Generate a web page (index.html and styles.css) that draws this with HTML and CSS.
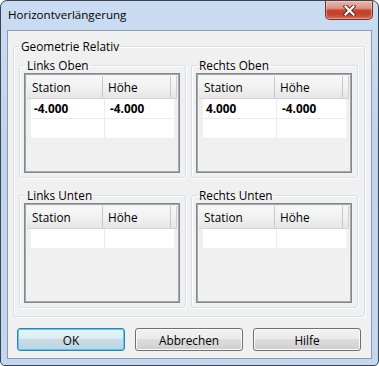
FILE: index.html
```html
<!DOCTYPE html>
<html lang="de">
<head>
<meta charset="utf-8">
<title>Horizontverlängerung</title>
<link rel="stylesheet" href="styles.css">
</head>
<body>
<div class="window">
  <div class="titlebar">
    <span class="title">Horizontverlängerung</span>
    <button class="close" aria-label="Schließen">
      <svg width="13" height="11" viewBox="0 0 13 11">
        <path d="M2.5 1.5 L10.5 9.5 M10.5 1.5 L2.5 9.5" stroke="#5a2620" stroke-width="4" stroke-linecap="square" fill="none"/>
        <path d="M2.5 1.5 L10.5 9.5 M10.5 1.5 L2.5 9.5" stroke="#ffffff" stroke-width="2.2" stroke-linecap="square" fill="none"/>
      </svg>
    </button>
  </div>
  <div class="client">
    <fieldset class="group outer">
      <legend>Geometrie Relativ</legend>
      <div class="grid">
        <fieldset class="group inner">
          <legend>Links Oben</legend>
          <div class="list">
            <div class="header"><span class="hcol c1">Station</span><span class="hcol c2">Höhe</span><span class="hcol filler"></span></div>
            <div class="row"><span class="cell c1">-4.000</span><span class="cell c2">-4.000</span></div>
            <div class="row"><span class="cell c1"></span><span class="cell c2"></span></div>
          </div>
        </fieldset>
        <fieldset class="group inner">
          <legend>Rechts Oben</legend>
          <div class="list">
            <div class="header"><span class="hcol c1">Station</span><span class="hcol c2">Höhe</span><span class="hcol filler"></span></div>
            <div class="row"><span class="cell c1">4.000</span><span class="cell c2">-4.000</span></div>
            <div class="row"><span class="cell c1"></span><span class="cell c2"></span></div>
          </div>
        </fieldset>
        <fieldset class="group inner">
          <legend>Links Unten</legend>
          <div class="list">
            <div class="header"><span class="hcol c1">Station</span><span class="hcol c2">Höhe</span><span class="hcol filler"></span></div>
            <div class="row"><span class="cell c1"></span><span class="cell c2"></span></div>
          </div>
        </fieldset>
        <fieldset class="group inner">
          <legend>Rechts Unten</legend>
          <div class="list">
            <div class="header"><span class="hcol c1">Station</span><span class="hcol c2">Höhe</span><span class="hcol filler"></span></div>
            <div class="row"><span class="cell c1"></span><span class="cell c2"></span></div>
          </div>
        </fieldset>
      </div>
    </fieldset>
    <div class="buttons">
      <button class="btn default">OK</button>
      <button class="btn">Abbrechen</button>
      <button class="btn">Hilfe</button>
    </div>
  </div>
</div>
</body>
</html>
```
FILE: styles.css
```css
* { box-sizing: border-box; }

html, body {
  margin: 0;
  padding: 0;
  background: #ffffff;
}

body {
  font-family: "Open Sans", "Noto Sans", sans-serif;
  font-size: 11.8px;
  color: #000;
}

.window {
  width: 379px;
  height: 366px;
  border: 1px solid #3b4450;
  border-radius: 7px 7px 5px 5px;
  background: linear-gradient(180deg, #cadcf1 0%, #bfd5ed 40%, #c3d8ef 100%);
  display: flex;
  flex-direction: column;
  overflow: hidden;
}

.titlebar {
  height: 29px;
  display: flex;
  justify-content: space-between;
  align-items: flex-start;
  flex: none;
}

.title {
  padding-left: 7px;
  line-height: 28px;
  font-size: 11.6px;
  color: #000;
}

.close {
  width: 48px;
  height: 19px;
  margin: 0 5px 0 0;
  padding: 0;
  border: 1px solid #6e302a;
  border-top: none;
  border-radius: 0 0 5px 5px;
  background: linear-gradient(180deg, #e9b6ab 0%, #dc9384 40%, #c54533 52%, #c23f2d 70%, #d66a51 100%);
  box-shadow: inset 0 0 0 1px rgba(255, 220, 210, 0.45);
  display: flex;
  align-items: center;
  justify-content: center;
}

.close svg { display: block; margin-top: 1px; }

.client {
  flex: 1;
  margin: 0 6px 6px 6px;
  border: 1px solid #8b9bb0;
  background: #f0f0f0;
  display: flex;
  flex-direction: column;
}

.group {
  margin: 0;
  border: 1px solid #d5dfe5;
  border-radius: 3px;
  box-shadow: inset 1px 1px 0 #ffffff, 1px 1px 0 #ffffff;
  min-width: 0;
}

.group legend {
  padding: 0 2px;
  line-height: 15px;
  font-size: 11.8px;
}

.outer {
  margin: 8px 6px 0 5px;
  padding: 4px 6px 8px 5px;
}

.outer > legend { margin-left: 0; }

.inner {
  padding: 0 5px 4px 4px;
}

.inner > legend { margin-left: 1px; }

.grid {
  display: grid;
  grid-template-columns: 1fr 1fr;
  column-gap: 5px;
  row-gap: 10px;
}

.list {
  height: 100px;
  border: 1px solid #828790;
  padding: 2px;
  background: #f0f0f0;
  box-shadow: inset 0 0 0 1px #a7a7a7;
}

.header {
  display: flex;
  height: 23px;
  background: linear-gradient(180deg, #f8f8f8 0%, #f1f1f1 50%, #e6e6e6 100%);
  border-bottom: 1px solid #d5d5d5;
}

.hcol {
  line-height: 22px;
  padding-left: 5px;
  border-right: 1px solid #c8c8c8;
  white-space: nowrap;
}

.hcol.c1 { width: 77px; }
.hcol.c2 { width: 69px; }
.hcol.filler { flex: 1; border-right: 1px solid #d0d0d0; }

.row {
  display: flex;
  margin-left: 4px;
  width: 143px;
  height: 20px;
  background: #ffffff;
  border-bottom: 1px solid #ececec;
}

.cell {
  line-height: 19px;
  font-weight: 700;
  white-space: nowrap;
}

.cell.c1 {
  width: 74px;
  padding-left: 3px;
  border-right: 1px solid #ececec;
}

.cell.c2 {
  flex: 1;
  padding-left: 5px;
}

.buttons {
  display: flex;
  gap: 10px;
  padding: 11px 0 0 9px;
}

.btn {
  width: 108px;
  height: 23px;
  padding: 0;
  font-family: inherit;
  font-size: 11.8px;
  color: #000;
  border: 1px solid #707070;
  border-radius: 3px;
  background: linear-gradient(180deg, #f2f2f2 0%, #ebebeb 49%, #dddddd 50%, #cfcfcf 100%);
  box-shadow: inset 0 0 0 1px #fbfbfb;
}

.btn.default {
  border-color: #3c7fb1;
  background: linear-gradient(180deg, #e8f3f9 0%, #dceaf2 49%, #c9dce7 50%, #bdd3e0 100%);
  box-shadow: inset 0 0 0 1px #48cdf5;
}
```
